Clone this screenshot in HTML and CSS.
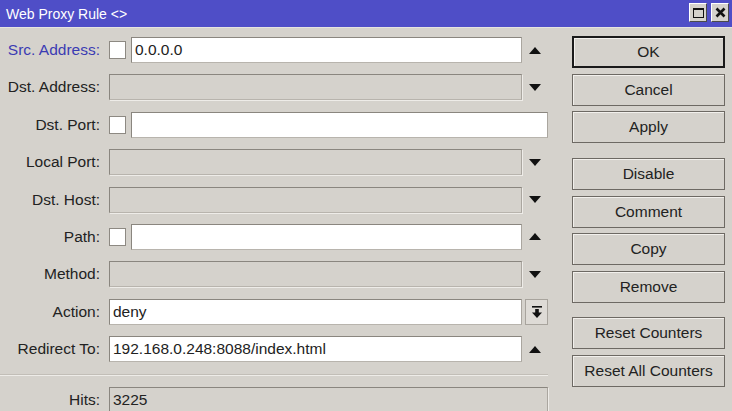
FILE: index.html
```html
<!DOCTYPE html>
<html lang="en">
<head>
    <meta charset="UTF-8">
    <meta name="viewport" content="width=device-width, initial-scale=1.0">
    <title>Web Proxy Rule</title>
    <link rel="stylesheet" href="styles.css">
</head>
<body>
    <div class="titlebar">
        <span class="title">Web Proxy Rule &lt;&gt;</span>
        <div class="titleBtns">
            <span class="tbtn"><span class="maxIcon"></span></span>
            <span class="tbtn">
                <svg width="11" height="11" viewBox="0 0 11 11"><path d="M1.5 1.5 L9.5 9.5 M9.5 1.5 L1.5 9.5" stroke="#111" stroke-width="2.6"/></svg>
            </span>
        </div>
    </div>

    <div class="content">
        <div class="form">
            <div class="row">
                <span class="lbl ativo">Src. Address:</span>
                <div class="ctl">
                    <span class="chk"></span>
                    <div class="field">0.0.0.0</div>
                    <span class="side"><span class="up"></span></span>
                </div>
            </div>
            <div class="row">
                <span class="lbl">Dst. Address:</span>
                <div class="ctl">
                    <div class="field off"></div>
                    <span class="side"><span class="down"></span></span>
                </div>
            </div>
            <div class="row">
                <span class="lbl">Dst. Port:</span>
                <div class="ctl">
                    <span class="chk"></span>
                    <div class="field"></div>
                </div>
            </div>
            <div class="row">
                <span class="lbl">Local Port:</span>
                <div class="ctl">
                    <div class="field off"></div>
                    <span class="side"><span class="down"></span></span>
                </div>
            </div>
            <div class="row">
                <span class="lbl">Dst. Host:</span>
                <div class="ctl">
                    <div class="field off"></div>
                    <span class="side"><span class="down"></span></span>
                </div>
            </div>
            <div class="row">
                <span class="lbl">Path:</span>
                <div class="ctl">
                    <span class="chk"></span>
                    <div class="field"></div>
                    <span class="side"><span class="up"></span></span>
                </div>
            </div>
            <div class="row">
                <span class="lbl">Method:</span>
                <div class="ctl">
                    <div class="field off"></div>
                    <span class="side"><span class="down"></span></span>
                </div>
            </div>
            <div class="row">
                <span class="lbl">Action:</span>
                <div class="ctl">
                    <div class="field">deny</div>
                    <span class="ddBtn">
                        <svg width="10" height="12" viewBox="0 0 10 12"><rect x="0" y="0" width="10" height="1.6" fill="#111"/><rect x="3.2" y="3" width="3.6" height="4" fill="#111"/><path d="M0 6.5 L10 6.5 L5 12 Z" fill="#111"/></svg>
                    </span>
                </div>
            </div>
            <div class="row">
                <span class="lbl">Redirect To:</span>
                <div class="ctl">
                    <div class="field">192.168.0.248:8088/index.html</div>
                    <span class="side"><span class="up"></span></span>
                </div>
            </div>
            <div class="sep"></div>
            <div class="row">
                <span class="lbl">Hits:</span>
                <div class="ctl">
                    <div class="field off">3225</div>
                </div>
            </div>
        </div>

        <div class="botoes">
            <div class="grupo">
                <div class="btn padrao">OK</div>
                <div class="btn">Cancel</div>
                <div class="btn">Apply</div>
            </div>
            <div class="grupo">
                <div class="btn">Disable</div>
                <div class="btn">Comment</div>
                <div class="btn">Copy</div>
                <div class="btn">Remove</div>
            </div>
            <div class="grupo">
                <div class="btn">Reset Counters</div>
                <div class="btn">Reset All Counters</div>
            </div>
        </div>
    </div>
</body>
</html>
```

FILE: styles.css
```css
body {
    margin: 0;
    background: #d5d2cc;
    font-family: "Liberation Sans", Arial, sans-serif;
    font-size: 15.5px;
    color: #222;
    overflow: hidden;
}

.titlebar {
    height: 27px;
    background: #4f4ec7;
    display: flex;
    align-items: center;
    justify-content: space-between;
    padding: 0 3px 0 6px;
    color: #fff;
    font-size: 14px;
    border-bottom: 1px solid #e6e4e0;
}

.titleBtns {
    display: flex;
    gap: 4px;
    margin-top: -2px;
}

.tbtn {
    width: 18px;
    height: 19px;
    box-sizing: border-box;
    background: #d5d2cc;
    border: 1px solid;
    border-color: #fff #4a4a4a #4a4a4a #fff;
    display: flex;
    align-items: center;
    justify-content: center;
}

.maxIcon {
    width: 11px;
    height: 10px;
    box-sizing: border-box;
    border: 1px solid #111;
    border-top-width: 2px;
}

.content {
    display: flex;
    padding-top: 9px;
}

.form {
    width: 548px;
    display: flex;
    flex-direction: column;
    gap: 11.4px;
}

.row {
    display: flex;
    align-items: center;
    height: 26px;
}

.lbl {
    width: 100px;
    margin-right: 9px;
    text-align: right;
    white-space: nowrap;
    flex: none;
}

.ativo {
    color: #3b3bb3;
}

.ctl {
    flex: 1;
    display: flex;
    align-items: center;
    height: 100%;
}

.chk {
    width: 17px;
    height: 18px;
    box-sizing: border-box;
    background: #fff;
    border: 1px solid #8d8982;
    margin-right: 5px;
    flex: none;
}

.field {
    flex: 1;
    height: 26px;
    box-sizing: border-box;
    border: 1px solid;
    border-color: #8a867f #aaa69f #b8b4ad #8a867f;
    background: #fff;
    padding: 0 3px;
    display: flex;
    align-items: center;
    white-space: nowrap;
}

.field.off {
    background: transparent;
    box-shadow: 1px 1px 0 #eeece8;
}

.side {
    width: 26px;
    flex: none;
    display: flex;
    justify-content: center;
    align-items: center;
}

.up {
    border-left: 6px solid transparent;
    border-right: 6px solid transparent;
    border-bottom: 7px solid #111;
}

.down {
    border-left: 6px solid transparent;
    border-right: 6px solid transparent;
    border-top: 7px solid #111;
}

.ddBtn {
    width: 23px;
    height: 26px;
    margin-left: 3px;
    box-sizing: border-box;
    border: 1px solid #a8a49d;
    background: #dedbd6;
    display: flex;
    align-items: center;
    justify-content: center;
    flex: none;
}

.sep {
    height: 1px;
    background: #c2beb7;
    border-bottom: 1px solid #eeece8;
}

.botoes {
    width: 153px;
    margin-left: 24px;
    margin-top: -1px;
    display: flex;
    flex-direction: column;
    gap: 14.5px;
}

.grupo {
    display: flex;
    flex-direction: column;
    gap: 5.7px;
}

.btn {
    height: 32px;
    box-sizing: border-box;
    border: 1px solid #6d6963;
    box-shadow: inset 1px 1px 0 #f2f0ec;
    display: flex;
    align-items: center;
    justify-content: center;
    white-space: nowrap;
}

.btn.padrao {
    border: 2px solid #1a1a1a;
}
```
